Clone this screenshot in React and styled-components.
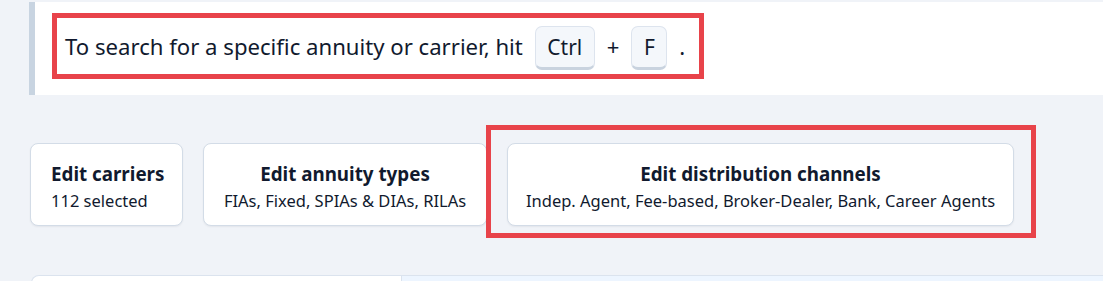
import React from "react";
import styled, { createGlobalStyle } from "styled-components";

const Global = createGlobalStyle`
  html, body {
    margin: 0;
    padding: 0;
    background: #f0f3f8;
    font-family: "Noto Sans", "Open Sans", sans-serif;
    color: #111a2e;
  }
  * { box-sizing: border-box; }
`;

const Page = styled.div`
  padding: 2px 0 0 29px;
  overflow: hidden;
  height: 281px;
`;

const Callout = styled.div`
  height: 93px;
  background: #ffffff;
  border-left: 6px solid #c8d4e1;
  padding: 11px 0 0 17px;
`;

const Highlight = styled.div`
  display: inline-flex;
  align-items: center;
  gap: 12px;
  height: 66px;
  border: 5px solid #e8434a;
  padding: 0 14px 0 8px;
  font-size: 22.15px;
`;

const Text = styled.span`
  line-height: 30px;
  white-space: nowrap;
`;

const Key = styled.kbd`
  display: inline-flex;
  align-items: center;
  height: 44px;
  margin-top: 4px;
  padding: 0 11.5px;
  font-family: "Noto Sans", "Open Sans", sans-serif;
  font-size: 21px;
  line-height: 28px;
  color: #111a2e;
  background: #f4f7fb;
  border: 1px solid #dde4ee;
  border-bottom: 3px solid #c9d3df;
  border-radius: 7px;
`;

const CardRow = styled.div`
  display: flex;
  gap: 20px;
  margin: 48px 0 0 1px;
`;

const CardWrap = styled.div`
  position: relative;
`;

const Card = styled.button`
  display: flex;
  flex-direction: column;
  align-items: ${(p) => (p.$left ? "flex-start" : "center")};
  height: 83px;
  padding: 17px 20px 0;
  background: #ffffff;
  border: 1px solid #d3dce7;
  border-radius: 8px;
  box-shadow: 0 1px 2px rgba(15, 23, 42, 0.06);
  font-family: "Noto Sans", "Open Sans", sans-serif;
  color: #111a2e;
  cursor: pointer;
  width: ${(p) => p.$width}px;
`;

const CardTitle = styled.span`
  font-size: 18.8px;
  font-weight: 700;
  line-height: 26px;
  white-space: nowrap;
`;

const CardSub = styled.span`
  font-size: 16.5px;
  line-height: 28px;
  white-space: nowrap;
`;

const Marker = styled.div`
  position: absolute;
  left: -21px;
  right: -22px;
  top: -18px;
  bottom: -12px;
  border: 5px solid #e8434a;
  pointer-events: none;
`;

const Bottom = styled.div`
  display: flex;
  margin: 49px 0 0 2px;
  height: 40px;
`;

const Tab = styled.div`
  width: 371px;
  background: #ffffff;
  border: 1px solid #dbe3ee;
  border-bottom: none;
  border-radius: 8px 0 0 0;
`;

const TabRest = styled.div`
  flex: 1;
  background: #edf5ff;
  border-top: 1px solid #dbe3ee;
`;

const cards = [
  { title: "Edit carriers", sub: "112 selected", width: 153, left: true },
  { title: "Edit annuity types", sub: "FIAs, Fixed, SPIAs & DIAs, RILAs", width: 284 },
  {
    title: "Edit distribution channels",
    sub: "Indep. Agent, Fee-based, Broker-Dealer, Bank, Career Agents",
    width: 507,
    marked: true,
  },
];

export default function App() {
  return (
    <>
      <Global />
      <Page>
        <Callout>
          <Highlight>
            <Text>To search for a specific annuity or carrier, hit</Text>
            <Key>Ctrl</Key>
            <Text>+</Text>
            <Key>F</Key>
            <Text>.</Text>
          </Highlight>
        </Callout>
        <CardRow>
          {cards.map((c) => (
            <CardWrap key={c.title}>
              <Card $width={c.width} $left={c.left}>
                <CardTitle>{c.title}</CardTitle>
                <CardSub>{c.sub}</CardSub>
              </Card>
              {c.marked && <Marker />}
            </CardWrap>
          ))}
        </CardRow>
        <Bottom>
          <Tab />
          <TabRest />
        </Bottom>
      </Page>
    </>
  );
}
